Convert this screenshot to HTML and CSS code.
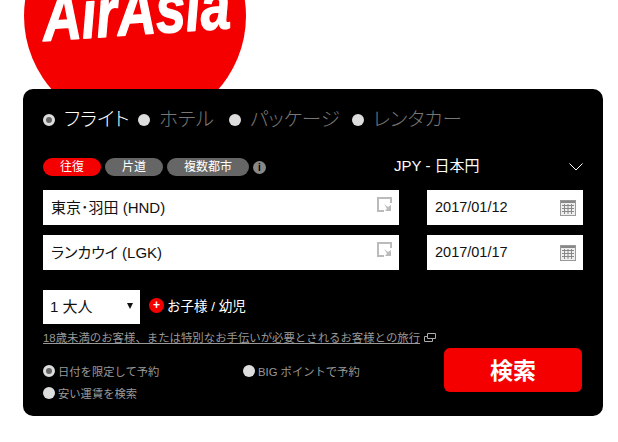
FILE: index.html
```html
<!DOCTYPE html>
<html lang="ja">
<head>
    <meta charset="UTF-8">
    <meta name="viewport" content="width=device-width, initial-scale=1.0">
    <title>AirAsia</title>
    <link rel="stylesheet" href="styles.css">
</head>
<body>
    <div class="logo">
        <svg width="222" height="89" viewBox="0 0 222 89">
            <circle cx="111" cy="16" r="111" fill="#f50000"/>
            <text x="20" y="41" class="logo-text" textLength="188" lengthAdjust="spacingAndGlyphs" transform="rotate(-4 20 41)">AirAsia</text>
        </svg>
    </div>

    <div class="panel">
        <div class="product-row">
            <span class="radio checked"></span><span class="product active product-flight">フライト</span>
            <span class="radio"></span><span class="product product-hotel">ホテル</span>
            <span class="radio"></span><span class="product product-package">パッケージ</span>
            <span class="radio"></span><span class="product">レンタカー</span>
        </div>

        <div class="trip-row">
            <div class="tabs">
                <span class="tab tab-on">往復</span>
                <span class="tab">片道</span>
                <span class="tab tab-wide">複数都市</span>
                <span class="info">i</span>
            </div>
            <div class="currency">
                <span class="currency-name">JPY - 日本円</span>
                <svg width="14" height="8" viewBox="0 0 14 8"><path d="M0.5 0.5 L7 7 L13.5 0.5" fill="none" stroke="#fff"/></svg>
            </div>
        </div>

        <div class="field-row">
            <div class="field field-place">
                <span>東京･羽田 (HND)</span>
                <svg class="place-icon" width="15" height="15" viewBox="0 0 15 15">
                    <path d="M14 6 V1 H1 V14 H7" fill="none" stroke="#bbb" stroke-width="2"/>
                    <path d="M7 7 L11 10 L14 8 V14 H8 L10 11.500 Z" fill="#bbb"/>
                </svg>
            </div>
            <div class="field field-date">
                <span>2017/01/12</span>
                <svg width="16" height="16" viewBox="0 0 16 16">
                    <rect x="0.500" y="0.500" width="15" height="15" fill="#eee" stroke="#999"/>
                    <rect x="1" y="1" width="14" height="2" fill="#888"/>
                    <path d="M2 5.500 H14 M2 8.500 H14 M2 11.500 H14 M4.500 4 V14 M8 4 V14 M11.500 4 V14" stroke="#888" fill="none"/>
                </svg>
            </div>
        </div>
        <div class="field-row">
            <div class="field field-place">
                <span>ランカウイ (LGK)</span>
                <svg class="place-icon" width="15" height="15" viewBox="0 0 15 15">
                    <path d="M14 6 V1 H1 V14 H7" fill="none" stroke="#bbb" stroke-width="2"/>
                    <path d="M7 7 L11 10 L14 8 V14 H8 L10 11.500 Z" fill="#bbb"/>
                </svg>
            </div>
            <div class="field field-date">
                <span>2017/01/17</span>
                <svg width="16" height="16" viewBox="0 0 16 16">
                    <rect x="0.500" y="0.500" width="15" height="15" fill="#eee" stroke="#999"/>
                    <rect x="1" y="1" width="14" height="2" fill="#888"/>
                    <path d="M2 5.500 H14 M2 8.500 H14 M2 11.500 H14 M4.500 4 V14 M8 4 V14 M11.500 4 V14" stroke="#888" fill="none"/>
                </svg>
            </div>
        </div>

        <div class="pax-row">
            <div class="select">
                <span>1 大人</span>
                <span class="arrow"></span>
            </div>
            <span class="plus">+</span>
            <span class="child">お子様 / 幼児</span>
        </div>

        <div class="note">
            <a href="#">18歳未満のお客様、または特別なお手伝いが必要とされるお客様との旅行</a>
            <svg width="12" height="9" viewBox="0 0 12 9">
                <path d="M3.500 0.500 H11.500 V5.500 H3.500 Z M3.500 3.500 H0.500 V8.500 H8.500 V5.500" fill="none" stroke="#aaa"/>
            </svg>
        </div>

        <div class="bottom-row">
            <div class="options">
                <div class="option option-date"><span class="radio checked"></span>日付を限定して予約</div>
                <div class="option"><span class="radio"></span>BIG ポイントで予約</div>
                <div class="option"><span class="radio"></span>安い運賃を検索</div>
            </div>
            <button class="search">検索</button>
        </div>
    </div>
</body>
</html>
```

FILE: styles.css
```css
body {
    font-family: "Liberation Sans", "Noto Sans CJK JP", sans-serif;
    margin: 0;
    padding: 0;
    background-color: #fff;
}
.logo {
    height: 89px;
    margin-left: 24px;
    overflow: hidden;
}
.logo svg {
    display: block;
}
.logo-text {
    font-family: "Liberation Sans", sans-serif;
    font-style: italic;
    font-weight: bold;
    font-size: 68px;
    fill: #fff;
    stroke: #fff;
    stroke-width: 1.500px;
    stroke-linejoin: round;
}
.panel {
    width: 540px;
    height: 327px;
    margin-left: 23px;
    padding: 0 20px;
    background: #000;
    border-radius: 10px;
}
.radio {
    display: inline-block;
    flex: none;
    box-sizing: border-box;
    width: 12px;
    height: 12px;
    background: #ddd;
    border-radius: 50%;
}
.radio.checked {
    border: 3px solid #ddd;
    background: #666;
}
.product-row {
    display: flex;
    align-items: center;
    height: 24px;
    padding-top: 19px;
}
.product {
    margin-left: 9px;
    margin-bottom: 5px;
    font-size: 19.500px;
    font-weight: 300;
    font-feature-settings: "palt";
    color: #777;
    white-space: nowrap;
}
.product.active {
    color: #fff;
}
.product-flight {
    width: 74px;
}
.product-hotel {
    width: 70px;
}
.product-package {
    width: 102px;
}
.trip-row {
    display: flex;
    justify-content: space-between;
    align-items: center;
    height: 18px;
    margin-top: 26px;
}
.tabs {
    display: flex;
    align-items: center;
    gap: 4px;
}
.tab {
    width: 58px;
    height: 18px;
    line-height: 18px;
    text-align: center;
    font-size: 12px;
    color: #fff;
    background: #666;
    border-radius: 9px;
}
.tab-on {
    background: #f50000;
}
.tab-wide {
    width: 82px;
}
.info {
    width: 13px;
    height: 13px;
    line-height: 13px;
    text-align: center;
    font-size: 10px;
    font-weight: bold;
    color: #000;
    background: #888;
    border-radius: 50%;
}
.currency {
    display: flex;
    justify-content: space-between;
    align-items: center;
    width: 189px;
    font-size: 15px;
    color: #fff;
}
.currency-name {
    margin-bottom: 5px;
}
.field-row {
    display: flex;
    justify-content: space-between;
    margin-top: 10px;
}
.trip-row + .field-row {
    margin-top: 14px;
}
.field {
    display: flex;
    justify-content: space-between;
    align-items: center;
    box-sizing: border-box;
    height: 35px;
    padding: 0 7px 2px 8px;
    font-size: 14.500px;
    font-feature-settings: "palt";
    color: #111;
    background: #fff;
}
.field-place {
    width: 356px;
    font-size: 15px;
}
.field-date {
    width: 156px;
}
.field-date svg {
    margin-top: 2px;
}
.place-icon {
    margin-bottom: 4px;
}
.pax-row {
    display: flex;
    align-items: center;
    margin-top: 20px;
}
.select {
    display: flex;
    justify-content: space-between;
    align-items: center;
    box-sizing: border-box;
    width: 97px;
    height: 34px;
    padding: 0 7px 3px;
    font-size: 15px;
    color: #111;
    background: #fff;
}
.arrow {
    border-top: 6px solid #111;
    border-left: 3px solid transparent;
    border-right: 3px solid transparent;
}
.plus {
    width: 15px;
    height: 15px;
    margin-left: 9px;
    margin-bottom: 4px;
    line-height: 14px;
    text-align: center;
    font-size: 12px;
    font-weight: bold;
    color: #fff;
    background: #f50000;
    border-radius: 50%;
}
.child {
    margin-left: 3px;
    margin-bottom: 5px;
    font-size: 13.500px;
    color: #fff;
}
.note {
    display: flex;
    align-items: center;
    gap: 4px;
    height: 16px;
    margin-top: 5px;
    white-space: nowrap;
}
.note a {
    font-size: 11.400px;
    color: #999;
}
.bottom-row {
    display: flex;
    justify-content: space-between;
    margin-top: 3px;
}
.options {
    display: flex;
    flex-wrap: wrap;
    align-content: flex-start;
    width: 380px;
    padding-top: 16px;
    row-gap: 8px;
}
.option {
    display: flex;
    align-items: center;
    gap: 3px;
    height: 14px;
    font-size: 11.300px;
    color: #999;
    white-space: nowrap;
}
.option-date {
    width: 200px;
}
.option:last-child {
    width: 200px;
}
.search {
    width: 138px;
    height: 44px;
    margin: 0 1px 0 0;
    padding: 0 0 2px;
    font-family: inherit;
    font-size: 23px;
    font-weight: bold;
    color: #fff;
    background: #f50000;
    border: none;
    border-radius: 6px;
}
```
